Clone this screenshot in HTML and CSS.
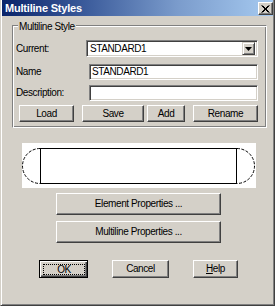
FILE: index.html
```html
<!DOCTYPE html>
<html>
<head>
<meta charset="utf-8">
<link rel="stylesheet" href="styles.css">
</head>
<body>
<div class="window">
  <div class="titlebar">
    <span class="title">Multiline Styles</span>
    <button class="close" aria-label="Close">
      <svg width="9" height="8" viewBox="0 0 9 8"><path d="M1 0.5 L8 7.5 M2 0.5 L9 7.5 M8 0.5 L1 7.5 M9 0.5 L2 7.5" stroke="#000" stroke-width="1" fill="none" transform="translate(-0.5 0)"/></svg>
    </button>
  </div>

  <div class="group">
    <span class="legend">Multiline Style</span>
    <div class="row row-current">
      <span class="label label-current">Current:</span>
      <div class="combo">
        <span class="combo-text">STANDARD1</span>
        <span class="drop"><svg width="7" height="4" viewBox="0 0 7 4"><path d="M0 0 H7 L3.5 4 Z" fill="#000"/></svg></span>
      </div>
    </div>
    <div class="row row-name">
      <span class="label label-field">Name</span>
      <div class="field">STANDARD1</div>
    </div>
    <div class="row row-desc">
      <span class="label label-field">Description:</span>
      <div class="field"></div>
    </div>
    <div class="row row-buttons">
      <button class="btn btn-load">Load</button>
      <button class="btn btn-save">Save</button>
      <button class="btn btn-add">Add</button>
      <button class="btn btn-rename">Rename</button>
    </div>
  </div>

  <div class="preview">
    <svg width="234" height="45" viewBox="0 0 234 45">
      <path d="M18 5.5 H215 M18 40.5 H215 M18.5 5 V41 M214.5 5 V41" stroke="#000" stroke-width="1" fill="none"/>
      <path d="M18 5.5 A17.5 17.5 0 0 0 18 40.5" stroke="#000" stroke-width="1" fill="none" stroke-dasharray="3 1.5"/>
      <path d="M215 5.5 A17.5 17.5 0 0 1 215 40.5" stroke="#000" stroke-width="1" fill="none" stroke-dasharray="3 1.5"/>
    </svg>
  </div>

  <button class="btn btn-wide btn-element">Element Properties ...</button>
  <button class="btn btn-wide btn-multiline">Multiline Properties ...</button>

  <div class="footer">
    <button class="btn btn-ok"><span class="focus">OK</span></button>
    <button class="btn btn-cancel">Cancel</button>
    <button class="btn btn-help"><span><u>H</u>elp</span></button>
  </div>
</div>
</body>
</html>
```

FILE: styles.css
```css
* { box-sizing: border-box; }
html, body { margin: 0; padding: 0; }
body {
  width: 275px;
  height: 306px;
  overflow: hidden;
  background: #d4d0c8;
  font-family: "Liberation Sans", Arial, sans-serif;
  font-size: 10px;
  letter-spacing: -0.4px;
  line-height: 12px;
  color: #000;
}
.window {
  width: 275px;
  height: 306px;
  background: #d4d0c8;
  border-style: solid;
  border-width: 0 1px 1px 1px;
  border-color: #d4d0c8 #404040 #404040 #d4d0c8;
  padding: 0 1px 1px 1px;
  box-shadow: inset 1px 0 #fff, inset -1px -1px #808080;
  display: flex;
  flex-direction: column;
  align-items: flex-start;
}
.titlebar {
  width: 271px;
  height: 16px;
  flex: none;
  background: linear-gradient(to right, #0a246a 0%, #3a5a9a 30%, #7b9ccc 65%, #a6caf0 100%);
  display: flex;
  justify-content: space-between;
  align-items: flex-start;
  padding: 0 0 0 3px;
}
.title {
  font-family: "Liberation Sans", Arial, sans-serif;
  font-weight: bold;
  font-size: 11px;
  line-height: 16px;
  color: #fff;
  letter-spacing: -0.2px;
}
.close {
  margin-top: 2px;
  width: 15px;
  height: 13px;
  padding: 0;
  background: #d4d0c8;
  border: 1px solid;
  border-color: #fff #404040 #404040 #fff;
  box-shadow: inset -1px -1px #808080;
  display: flex;
  align-items: center;
  justify-content: center;
}
.group {
  position: relative;
  margin: 9px 0 0 10px;
  width: 255px;
  height: 103px;
  flex: none;
  border: 1px solid;
  border-color: #808080 #fff #fff #808080;
  box-shadow: inset 1px 1px #fff, inset -1px -1px #808080;
  padding: 14px 0 0 0;
  display: flex;
  flex-direction: column;
}
.legend {
  position: absolute;
  top: -5px;
  left: 5px;
  padding: 0 1px;
  background: #d4d0c8;
  line-height: 12px;
}
.row {
  display: flex;
  align-items: center;
}
.row-current { height: 17px; padding-left: 3px; }
.row-name { height: 16px; margin-top: 7px; padding-left: 3px; }
.row-desc { height: 16px; margin-top: 5px; padding-left: 3px; }
.row-buttons { height: 17px; margin-top: 4px; padding-left: 6px; }
.label-current { width: 70px; }
.label-field { width: 73px; }
.combo {
  width: 172px;
  height: 17px;
  background: #fff;
  border: 1px solid;
  border-color: #808080 #fff #fff #808080;
  box-shadow: inset 1px 1px #404040, inset -1px -1px #d4d0c8;
  padding: 2px 2px 2px 3px;
  display: flex;
  align-items: center;
  justify-content: space-between;
}
.drop {
  width: 13px;
  height: 13px;
  background: #d4d0c8;
  border: 1px solid;
  border-color: #d4d0c8 #404040 #404040 #d4d0c8;
  box-shadow: inset 1px 1px #fff, inset -1px -1px #808080;
  display: flex;
  align-items: center;
  justify-content: center;
}
.field {
  width: 169px;
  height: 16px;
  background: #fff;
  border: 1px solid;
  border-color: #808080 #fff #fff #808080;
  box-shadow: inset 1px 1px #404040, inset -1px -1px #d4d0c8;
  padding: 1px 0 0 2px;
  line-height: 12px;
}
.btn {
  font: inherit;
  letter-spacing: inherit;
  color: #000;
  background: #d4d0c8;
  border: 1px solid;
  border-color: #fff #404040 #404040 #fff;
  box-shadow: inset -1px -1px #808080;
  padding: 0;
  margin: 0;
  display: flex;
  align-items: center;
  justify-content: center;
  flex: none;
}
.btn-load { width: 55px; height: 17px; }
.btn-save { width: 62px; height: 17px; margin-left: 8px; }
.btn-add { width: 38px; height: 17px; margin-left: 3px; }
.btn-rename { width: 65px; height: 17px; margin-left: 8px; }
.preview {
  margin: 15px 0 0 20px;
  width: 234px;
  height: 45px;
  background: #fff;
  flex: none;
}
.preview svg { display: block; }
.btn-wide {
  width: 165px;
  height: 22px;
  margin-left: 54px;
}
.btn-element { margin-top: 5px; }
.btn-multiline { margin-top: 6px; }
.footer {
  display: flex;
  margin-top: 17px;
  padding-left: 37px;
}
.btn-ok {
  width: 49px;
  height: 18px;
  border: 1px solid #000;
  box-shadow: inset 1px 1px #fff, inset -1px -1px #404040, inset -2px -2px #808080;
  align-items: stretch;
  justify-content: stretch;
}
.focus {
  flex: 1;
  margin: 3px 2px 2px 3px;
  border: 1px dotted #000;
  display: flex;
  align-items: center;
  justify-content: center;
}
.btn-cancel { width: 57px; height: 18px; margin-left: 24px; }
.btn-help { width: 45px; height: 18px; margin-left: 24px; }
```
